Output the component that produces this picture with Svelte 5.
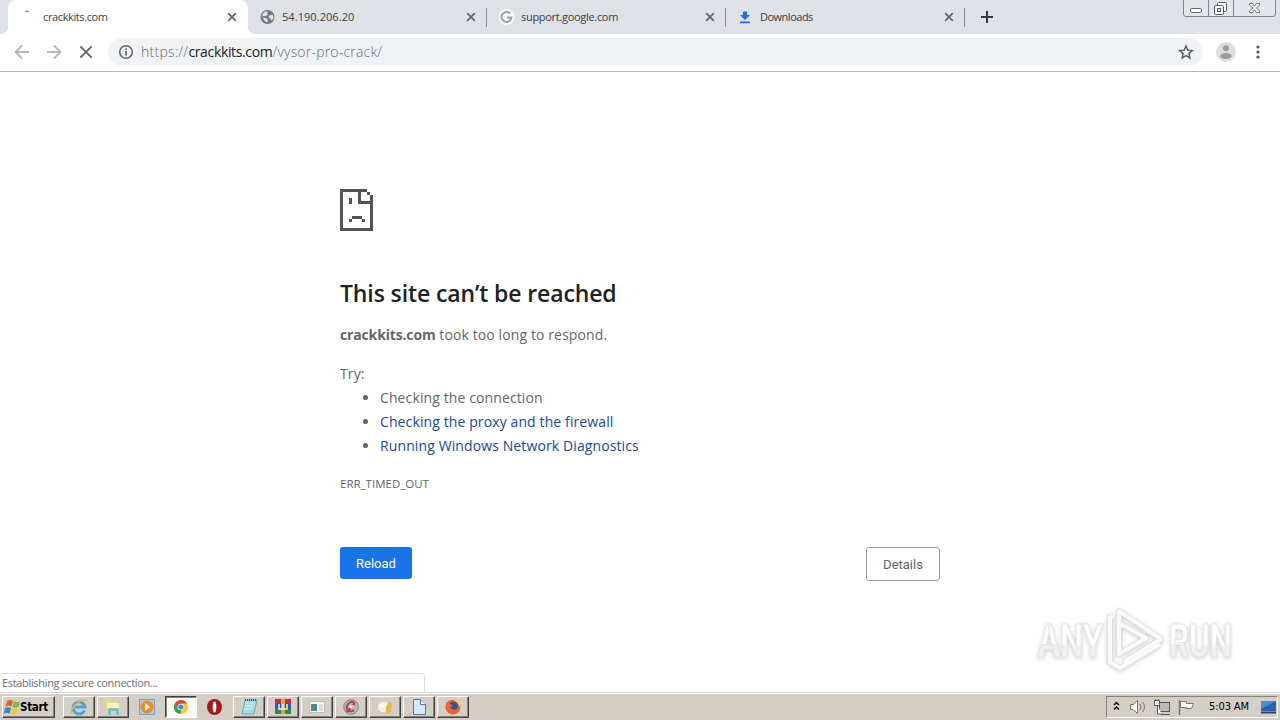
<script lang="ts">
    let tabs = [
        { id: 1, title: "crackkits.com", icon: "loading", spacing: -0.38, active: true },
        { id: 2, title: "54.190.206.20", icon: "globe", spacing: 0.06, active: false },
        { id: 3, title: "support.google.com", icon: "google", spacing: -0.3, active: false },
        { id: 4, title: "Downloads", icon: "download", spacing: -0.5, active: false },
    ];

    let apps = [
        { name: "ie", state: "raised" },
        { name: "explorer", state: "raised" },
        { name: "player", state: "flat" },
        { name: "chrome", state: "pressed" },
        { name: "opera", state: "flat" },
        { name: "notepad", state: "raised" },
        { name: "winrar", state: "raised" },
        { name: "window", state: "raised" },
        { name: "ccleaner", state: "raised" },
        { name: "paint", state: "raised" },
        { name: "document", state: "raised" },
        { name: "firefox", state: "raised" },
    ];

    function selectTab(id) {
        tabs = tabs.map((item) => ({ ...item, active: item.id == id }));
    }
</script>

<div class="screen">
    <header class="strip">
        <div class="tabs">
            {#each tabs as tab}
                <!-- svelte-ignore a11y_click_events_have_key_events, a11y_no_static_element_interactions -->
                <div class="tab" class:active={tab.active} on:click={() => selectTab(tab.id)}>
                    <svg class="tab-icon" width="16" height="16" viewBox="0 0 16 16">
                        {#if tab.icon == "loading"}
                            <path d="M17 2.500h4" transform="translate(-12 0)" stroke="#999" stroke-width="1.500" />
                        {:else if tab.icon == "globe"}
                            <circle cx="7.500" cy="8" r="7" fill="#73767a" />
                            <path d="M8.500 2.800l-1.500 1.500 1 1.700-3 1-2.800.5q0-3.500 2.800-5zM3 8.500l3 .5 2 2-1 2.500q-3-1-4-5zM9 6.500l3.500-1 1 2.500-.5 2.500-2 1-.5-2-2-1z" fill="#dee1e6" />
                        {:else if tab.icon == "google"}
                            <circle cx="7.500" cy="8" r="8" fill="#f6f7f8" />
                            <path d="M11.300 4.600A5 5 0 1 0 12.500 8.500H8" fill="none" stroke="#9c9ea1" stroke-width="2" />
                        {:else}
                            <path d="M5 2.500h4V6h3L7 11 2 6h3zM2 12.500h10v1.700H2z" fill="#2a6be0" />
                        {/if}
                    </svg>
                    <span class="tab-title" style="letter-spacing: {tab.spacing}px">{tab.title}</span>
                    <svg class="tab-close" width="10" height="10" viewBox="0 0 10 10">
                        <path d="M1.200 1.200l7.600 7.600M8.800 1.200L1.200 8.800" stroke="#64676c" stroke-width="1.800" />
                    </svg>
                </div>
            {/each}
            <svg class="plus" width="12" height="12" viewBox="0 0 12 12">
                <path d="M6 0v12M0 6h12" stroke="#34373d" stroke-width="2" />
            </svg>
        </div>
        <div class="controls">
            <svg width="93" height="17" viewBox="0 0 93 17" fill="none" stroke="#7f838b">
                <path d="M.5 0v14q0 2.500 2.500 2.500h87q2.500 0 2.500-2.500V0M25.500 0v16M50.500 0v16" fill="#e3e6ea" />
                <rect x="7.500" y="8.500" width="11" height="4" rx="1" fill="#fff" stroke="#62666e" />
                <rect x="34.500" y="2.500" width="9" height="9" rx="1" fill="#fff" stroke="#555962" />
                <rect x="31.500" y="5.500" width="9" height="9" rx="1" fill="#fff" stroke="#555962" />
                <rect x="34.500" y="8.500" width="3" height="3" stroke="#555962" />
                <path d="M66.500 3.500h3l2 2.500 2-2.500h3v1.500L73.500 8l3 3v1.500h-3l-2-2.500-2 2.500h-3V11l3-3-3-3z" fill="#fff" stroke="#70747b" />
            </svg>
        </div>
    </header>

    <nav class="toolbar">
        <svg class="nav-icon" width="16" height="16" viewBox="0 0 16 16" fill="none" stroke="#b6b8bb" stroke-width="1.900">
            <path d="M15 8H2M8 1.500L1.500 8 8 14.500" />
        </svg>
        <svg class="nav-icon" width="16" height="16" viewBox="0 0 16 16" fill="none" stroke="#b6b8bb" stroke-width="1.900">
            <path d="M1 8h13M8 1.500L14.500 8 8 14.500" />
        </svg>
        <svg class="nav-icon" width="16" height="16" viewBox="0 0 16 16" fill="none" stroke="#5f6267" stroke-width="1.800">
            <path d="M2.300 2.300l11.400 11.400M13.700 2.300L2.300 13.700" />
        </svg>
        <div class="omnibox">
            <svg width="16" height="16" viewBox="0 0 16 16">
                <circle cx="8" cy="8" r="6.300" fill="none" stroke="#5f6368" stroke-width="1.500" />
                <path d="M7.200 7h1.700v4.500H7.200zM7.200 4.200h1.700v1.700H7.200z" fill="#5f6368" />
            </svg>
            <div class="url"><span class="scheme">https://</span><b>crackkits.com</b><span class="path">/vysor-pro-crack/</span></div>
            <svg width="16" height="16" viewBox="0 0 16 16">
                <path d="M8 2l1.800 4.200 4.500.4-3.400 3 1 4.400L8 11.700 4.100 14l1-4.400-3.400-3 4.500-.4z" fill="none" stroke="#5a5d62" stroke-width="1.500" />
            </svg>
        </div>
        <svg class="avatar" width="20" height="20" viewBox="0 0 20 20">
            <circle cx="10" cy="10" r="10" fill="#dddddd" />
            <circle cx="10" cy="6.300" r="3" fill="#9b9b9b" />
            <ellipse cx="10" cy="14" rx="5.800" ry="3" fill="#9b9b9b" />
        </svg>
        <svg class="dots" width="4" height="14" viewBox="0 0 4 14" fill="#505358">
            <circle cx="2" cy="2" r="1.600" />
            <circle cx="2" cy="7" r="1.600" />
            <circle cx="2" cy="12" r="1.600" />
        </svg>
    </nav>

    <main class="page">
        <div class="error">
            <svg class="sad" width="33" height="42" viewBox="0 0 33 42" fill="#535353" shape-rendering="crispEdges">
                <path d="M0 0h27v3H3v36h27V15H18V3h3v9h9V6h3v36H0zM27 3h3v3h-3zM9 9h3v6H9zM12 27h10v3H12zM9 30h3v3H9zM22 30h3v3h-3z" />
            </svg>
            <h1>This site can’t be reached</h1>
            <p class="summary"><strong>crackkits.com</strong> took too long to respond.</p>
            <p class="try">Try:</p>
            <ul>
                <li>Checking the connection</li>
                <li><a href="#proxy">Checking the proxy and the firewall</a></li>
                <li><a href="#diagnostics">Running Windows Network Diagnostics</a></li>
            </ul>
            <div class="code">ERR_TIMED_OUT</div>
            <div class="buttons">
                <button class="reload">Reload</button>
                <button class="details">Details</button>
            </div>
        </div>

        <div class="bubble">Establishing secure connection...</div>

        <svg class="watermark" width="220" height="80" viewBox="0 0 220 80">
            <defs>
                <linearGradient id="fade" x1="0" y1="0" x2="0" y2="1">
                    <stop offset="0.550" stop-color="#fff" />
                    <stop offset="0.600" stop-color="#f1f1f1" />
                </linearGradient>
            </defs>
            <g fill="url(#fade)" stroke="#e6e6e6" stroke-width="1">
                <text x="5" y="57" font-size="47" textLength="65" lengthAdjust="spacingAndGlyphs">ANY</text>
                <text x="136" y="57" font-size="47" textLength="63" lengthAdjust="spacingAndGlyphs">RUN</text>
            </g>
            <g fill="none" stroke-linejoin="round">
                <g stroke="#dedede" stroke-width="5.500">
                    <path d="M86 46V11l42 28-37 23" />
                    <path d="M80 17h-3v45l10 6 40-24" />
                    <path d="M86 23v31l27-16-27-15" />
                </g>
                <g stroke="#fafafa" stroke-width="4">
                    <path d="M86 46V11l42 28-37 23" />
                    <path d="M80 17h-3v45l10 6 40-24" />
                    <path d="M86 23v31l27-16-27-15" />
                </g>
            </g>
        </svg>
    </main>

    <footer class="taskbar">
        <button class="start">
            <svg width="18" height="17" viewBox="0 0 18 17">
                <path d="M4 2q3-2 6 0L8.500 7.500q-3-1.500-6 0z" fill="#e8622a" />
                <path d="M11 2.500q3 1.500 6 0L15.500 8q-3 1.500-6 0z" fill="#80b73c" />
                <path d="M2 9q3-1.500 6 0l-1.500 5.500q-3-1.500-6 0z" fill="#3d83cc" />
                <path d="M9 9.500q3 1.500 6 0L13.500 15q-3 1.500-6 0z" fill="#f5c52f" />
            </svg>
            <span>Start</span>
        </button>
        <div class="apps">
            {#each apps as app}
                <div class="app {app.state}">
                    <svg width="18" height="18" viewBox="0 0 18 18">
                        {#if app.name == "ie"}
                            <path d="M14.500 12.500A6 6 0 1 1 15 9H5" fill="none" stroke="#42a5df" stroke-width="2.800" />
                            <path d="M2 16C-2 12 11-1 17 3" fill="none" stroke="#e7b842" stroke-width="1.500" />
                        {:else if app.name == "explorer"}
                            <path d="M1 2h6l1 2h8v11H1z" fill="#efd679" />
                            <path d="M3 5h12v5H3z" fill="#fff3b7" />
                            <path d="M4 17v-5q0-2 2-2h6q3 0 3 2v5h-3v-4H7v4z" fill="#73bbdf" />
                        {:else if app.name == "player"}
                            <rect x="1.500" y="1.500" width="15" height="15" fill="#a3cde8" stroke="#74a6c8" />
                            <circle cx="9" cy="9" r="6.500" fill="#f48b1e" />
                            <path d="M7 5l5 4-5 4z" fill="#fff" />
                        {:else if app.name == "chrome"}
                            <circle cx="9" cy="9" r="7" fill="#f6c72f" />
                            <path d="M2.900 5.500A7 7 0 0 1 15.100 5.500H9L6 10.500z" fill="#dc4637" />
                            <path d="M2.900 5.500l3 5.500 3.500 1.500L8 16A7 7 0 0 1 2.900 5.500z" fill="#2da05a" />
                            <circle cx="9" cy="9" r="3.300" fill="#fff" />
                            <circle cx="9" cy="9" r="2.600" fill="#4184e8" />
                        {:else if app.name == "opera"}
                            <ellipse cx="8.500" cy="9" rx="7.500" ry="8" fill="#a9171d" />
                            <ellipse cx="8.500" cy="9" rx="1.800" ry="5.500" fill="#fff" />
                        {:else if app.name == "notepad"}
                            <path d="M5 2h12l-3 14H2z" fill="#a3dbe4" stroke="#68abb5" />
                            <path d="M5 5h9M5 8h8M4 11h8" stroke="#d5f2f5" />
                            <path d="M5 2h12" stroke="#4b5557" stroke-width="2" stroke-dasharray="1 1" />
                        {:else if app.name == "winrar"}
                            <path d="M1 1h16v5H1z" fill="#bd3240" />
                            <path d="M1 6h16v5H1z" fill="#3658b5" />
                            <path d="M1 11h16v5H1z" fill="#34863e" />
                            <path d="M7 1h4v15H7z" fill="#d5a946" />
                            <path d="M5 6v5h8V6M9 6v4" fill="none" stroke="#eee" stroke-width="1.500" />
                        {:else if app.name == "window"}
                            <rect x="1.500" y="3.500" width="15" height="11" fill="#f3f5f4" stroke="#b6bebd" />
                            <path d="M3 6h6v7H3z" fill="#4c8d82" />
                            <path d="M11 6h4v7h-4z" fill="#d8dddb" />
                        {:else if app.name == "ccleaner"}
                            <circle cx="9" cy="9" r="7.300" fill="#b2b7ba" stroke="#7c8286" />
                            <path d="M12 4.500q-3-2-6 1.500-3 5 1 7 3 1 5-1M5 14l8-9" fill="none" stroke="#cd303c" stroke-width="1.900" />
                            <path d="M7 8l5-1-3 4z" fill="#fff" />
                        {:else if app.name == "paint"}
                            <ellipse cx="8" cy="9" rx="7" ry="6" fill="#f2eee1" stroke="#cec6b1" />
                            <path d="M10 9l3-6 3 2-1 9-5 2z" fill="#e6b84c" />
                            <circle cx="6" cy="8" r="2" fill="#fff" />
                        {:else if app.name == "document"}
                            <path d="M3.500 1.500h7l5 5v10h-12z" fill="#d6e9fb" stroke="#5278a6" />
                            <path d="M10.500 1.500v5h5" fill="#fff" stroke="#5278a6" />
                        {:else}
                            <circle cx="9" cy="9" r="7.500" fill="#ee602b" />
                            <path d="M8 1q9 1 8.500 9L13 5z" fill="#ffc935" />
                            <circle cx="9.500" cy="8" r="4.500" fill="#3a4fa4" />
                            <path d="M2 4l4 2 3 2-3 1q2 4 7 2-2 4-7 2-4-3-4-9z" fill="#f36a2c" />
                        {/if}
                    </svg>
                </div>
            {/each}
        </div>
        <div class="tray">
            <svg width="92" height="20" viewBox="0 0 92 20" fill="none">
                <path d="M6 8l2.500-2.500L11 8M6 12.500L8.500 10 11 12.500" stroke="#111" stroke-width="1.500" />
                <path d="M22.500 7.500h3l4-4v13l-4-4h-3z" fill="#fff" stroke="#777" />
                <path d="M32 7q2 3 0 6M34.500 5q4 5 0 10" stroke="#777" />
                <rect x="51.500" y="5.500" width="10" height="9" fill="#bbb" stroke="#555" />
                <path d="M53 17.500h9M46.500 3.500h5v5h-5zM49.500 8v9h4M47.500 2v2M50.500 2v2" fill="#fff" stroke="#555" />
                <path d="M71.500 3v15" stroke="#777" stroke-width="1.500" />
                <path d="M72.500 4.500h6v2h7l-2 5h-5v-1h-6z" fill="#fff" stroke="#777" />
            </svg>
            <span class="clock">5:03 AM</span>
            <svg width="17" height="15" viewBox="0 0 17 15">
                <path d="M1 1h15v10H1z" fill="#2862b5" />
                <path d="M1 1h15L1 9z" fill="#4e8cd5" />
                <path d="M1 12.500h15" stroke="#23446f" stroke-width="2" />
            </svg>
        </div>
    </footer>
</div>

<style>
    :global(body) {
        margin: 0;
        overflow: hidden;
    }
    .screen {
        display: flex;
        flex-direction: column;
        width: 1280px;
        height: 720px;
        background: #fff;
        font-family: "Open Sans", "Noto Sans", sans-serif;
    }
    .screen * {
        box-sizing: border-box;
    }
    svg {
        display: block;
        flex-shrink: 0;
    }

    .strip {
        display: flex;
        justify-content: space-between;
        height: 34px;
        padding: 0 4px 0 8px;
        background: #dee1e6;
    }
    .tabs {
        display: flex;
        align-items: center;
    }
    .tab {
        display: flex;
        align-items: center;
        width: 239px;
        height: 34px;
        padding: 0 11px 0 12px;
        position: relative;
        cursor: default;
    }
    .tab.active {
        width: 240px;
        background: #fff;
        border-radius: 8px 8px 0 0;
    }
    .tab.active:before,
    .tab.active:after {
        content: "";
        position: absolute;
        bottom: 0;
        width: 8px;
        height: 8px;
    }
    .tab.active:before {
        left: -8px;
        background: radial-gradient(circle at 0 0, transparent 8px, #fff 8px);
    }
    .tab.active:after {
        right: -8px;
        background: radial-gradient(circle at 100% 0, transparent 8px, #fff 8px);
    }
    .tab:not(.active):after {
        content: "";
        position: absolute;
        right: 0;
        top: 8px;
        width: 1px;
        height: 19px;
        background: #868a91;
    }
    .tab-icon {
        margin-right: 6px;
    }
    .tab.active .tab-icon {
        margin-right: 7px;
    }
    .tab-title {
        flex: 1;
        font-size: 11px;
        line-height: 16px;
        color: #3c4043;
    }
    .plus {
        margin-left: 16px;
    }

    .toolbar {
        display: flex;
        align-items: center;
        height: 38px;
        padding: 0 20px 2px 14px;
        border-bottom: 1px solid #b4b5b4;
    }
    .nav-icon {
        margin-right: 16px;
    }
    .omnibox {
        display: flex;
        align-items: center;
        width: 1095px;
        height: 28px;
        margin-left: -2px;
        padding: 0 9px 0 10px;
        border-radius: 14px;
        background: #f0f3f5;
    }
    .url {
        flex: 1;
        padding-left: 7px;
        font-size: 14px;
        font-weight: 300;
        line-height: 20px;
        color: #686c71;
    }
    .url b {
        font-weight: 400;
        letter-spacing: -0.35px;
        color: #202124;
    }
    .scheme {
        letter-spacing: 0.25px;
    }
    .path {
        letter-spacing: 0.2px;
    }
    .avatar {
        margin-left: 13px;
    }
    .dots {
        margin-left: 20px;
    }

    .page {
        flex: 1;
        position: relative;
        padding-top: 117px;
        min-height: 0;
    }
    .error {
        width: 600px;
        margin: 0 auto;
        font-size: 14px;
        line-height: 24px;
        letter-spacing: 0.11px;
        color: #646569;
    }
    h1 {
        margin: 48px 0 0;
        font-size: 23px;
        font-weight: 600;
        line-height: 29px;
        letter-spacing: -0.12px;
        color: #202124;
        white-space: nowrap;
    }
    .summary {
        margin: 15px 0 0;
    }
    .summary strong {
        letter-spacing: -0.15px;
    }
    .try {
        margin: 15px 0 0;
    }
    ul {
        margin: 0;
        padding-left: 40px;
    }
    a {
        color: #1b479c;
        text-decoration: none;
    }
    .code {
        margin-top: 15px;
        font-size: 11.500px;
        line-height: 22px;
        letter-spacing: 0;
    }
    .buttons {
        display: flex;
        justify-content: space-between;
        align-items: flex-start;
        margin-top: 52px;
    }
    .buttons button {
        height: 32px;
        padding: 0;
        font-family: Roboto, sans-serif;
        font-size: 13px;
        border-radius: 3px;
    }
    .buttons .reload {
        width: 72px;
        color: #fff;
        background: #1a73e8;
        border: 0;
    }
    .buttons .details {
        width: 74px;
        height: 34px;
        color: #5f6368;
        background: #fff;
        border: 1px solid #9a9ca0;
    }

    .bubble {
        position: absolute;
        left: 0;
        bottom: 0;
        width: 425px;
        height: 19px;
        padding-left: 2px;
        border: 1px solid #dcdcdc;
        border-width: 1px 1px 0 0;
        border-radius: 0 4px 0 0;
        font-size: 11px;
        line-height: 18px;
        letter-spacing: -0.33px;
        color: #6c6d70;
        background: #fff;
    }
    .watermark {
        position: absolute;
        right: 27px;
        bottom: 12px;
        font-family: Roboto, sans-serif;
        font-weight: 700;
        filter: drop-shadow(0 1px 2px #ccc);
    }

    .taskbar {
        display: flex;
        align-items: center;
        height: 28px;
        padding: 1px 2px 0;
        border-top: 1px solid #d4d0c8;
        background: #d4cec6;
        box-shadow: inset 0 1px #fff;
    }
    .start,
    .app.raised {
        border: 1px solid;
        border-color: #fff #404040 #404040 #fff;
        box-shadow: inset -1px -1px #85817b;
        background: #d4cec6;
    }
    .start {
        display: flex;
        align-items: center;
        width: 53px;
        height: 22px;
        padding: 0;
        font-family: "DejaVu Sans Condensed", "DejaVu Sans", sans-serif;
        font-size: 11.500px;
        font-weight: 700;
        letter-spacing: -0.3px;
        color: #000;
    }
    .start span {
        margin-left: -1px;
    }
    .apps {
        display: flex;
        gap: 2px;
        margin-left: 8px;
    }
    .app {
        display: flex;
        align-items: center;
        justify-content: center;
        width: 32px;
        height: 22px;
    }
    .app.pressed {
        border: 1px solid;
        border-color: #404040 #fff #fff #404040;
        background: #fcfbfa;
        box-shadow: inset 1px 1px #85817b;
    }
    .tray {
        display: flex;
        align-items: center;
        width: 172px;
        height: 22px;
        margin-left: auto;
        border: 1px solid;
        border-color: #85817b #fff #fff #85817b;
    }
    .tray svg {
        margin-left: 1px;
    }
    .clock {
        width: 50px;
        margin: 0 0 0 9px;
        font-family: "DejaVu Sans Condensed", "DejaVu Sans", sans-serif;
        font-size: 11px;
        letter-spacing: -0.1px;
        line-height: 16px;
        color: #000;
        white-space: nowrap;
    }
</style>
